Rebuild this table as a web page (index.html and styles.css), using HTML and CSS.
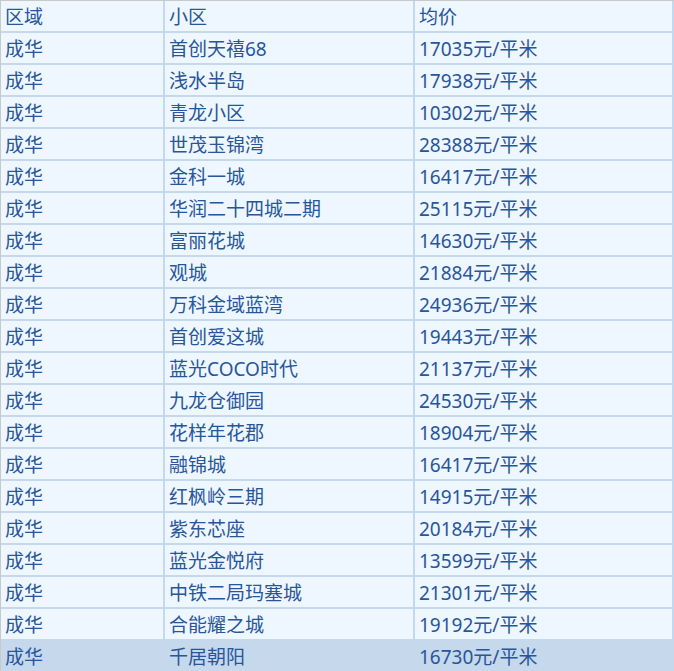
FILE: index.html
```html
<!DOCTYPE html>
<html lang="zh">
<head>
<meta charset="utf-8">
<title>均价</title>
<link rel="stylesheet" href="styles.css">
</head>
<body>
<div class="frame">
<table class="price-table">
<thead>
<tr><th class="c1">区域</th><th class="c2">小区</th><th class="c3">均价</th></tr>
</thead>
<tbody>
<tr><td>成华</td><td>首创天禧68</td><td>17035元/平米</td></tr>
<tr><td>成华</td><td>浅水半岛</td><td>17938元/平米</td></tr>
<tr><td>成华</td><td>青龙小区</td><td>10302元/平米</td></tr>
<tr><td>成华</td><td>世茂玉锦湾</td><td>28388元/平米</td></tr>
<tr><td>成华</td><td>金科一城</td><td>16417元/平米</td></tr>
<tr><td>成华</td><td>华润二十四城二期</td><td>25115元/平米</td></tr>
<tr><td>成华</td><td>富丽花城</td><td>14630元/平米</td></tr>
<tr><td>成华</td><td>观城</td><td>21884元/平米</td></tr>
<tr><td>成华</td><td>万科金域蓝湾</td><td>24936元/平米</td></tr>
<tr><td>成华</td><td>首创爱这城</td><td>19443元/平米</td></tr>
<tr><td>成华</td><td>蓝光COCO时代</td><td>21137元/平米</td></tr>
<tr><td>成华</td><td>九龙仓御园</td><td>24530元/平米</td></tr>
<tr><td>成华</td><td>花样年花郡</td><td>18904元/平米</td></tr>
<tr><td>成华</td><td>融锦城</td><td>16417元/平米</td></tr>
<tr><td>成华</td><td>红枫岭三期</td><td>14915元/平米</td></tr>
<tr><td>成华</td><td>紫东芯座</td><td>20184元/平米</td></tr>
<tr><td>成华</td><td>蓝光金悦府</td><td>13599元/平米</td></tr>
<tr><td>成华</td><td>中铁二局玛塞城</td><td>21301元/平米</td></tr>
<tr><td>成华</td><td>合能耀之城</td><td>19192元/平米</td></tr>
<tr class="active"><td>成华</td><td>千居朝阳</td><td>16730元/平米</td></tr>
</tbody>
</table>
</div>
</body>
</html>
```
FILE: styles.css
```css
html, body {
  margin: 0;
  padding: 0;
  background: #ffffff;
  overflow: hidden;
}
.frame {
  width: 673px;
  height: 670px;
  overflow: hidden;
  border-top: 1px solid #c9c9c9;
  border-left: 1px solid #c9c9c9;
}
.price-table {
  border-collapse: separate;
  border-spacing: 0;
  width: 673px;
  table-layout: fixed;
  font-family: "Noto Sans", "Noto Sans CJK SC", sans-serif;
  font-size: 19px;
  color: #28569a;
}
.price-table th,
.price-table td {
  height: 27px;
  padding: 3px 0 0 4px;
  line-height: 27px;
  text-align: left;
  font-weight: normal;
  background: #eef6ff;
  border-right: 2px solid #c5d9ee;
  border-bottom: 2px solid #c5d9ee;
  white-space: nowrap;
  box-sizing: content-box;
  vertical-align: middle;
}
.price-table .c1 { width: 158px; }
.price-table .c2 { width: 244px; }
.price-table .c3 { width: 253px; }
.price-table tr.active td {
  background: #c5d8ec;
  border-color: #c5d8ec;
}
```
